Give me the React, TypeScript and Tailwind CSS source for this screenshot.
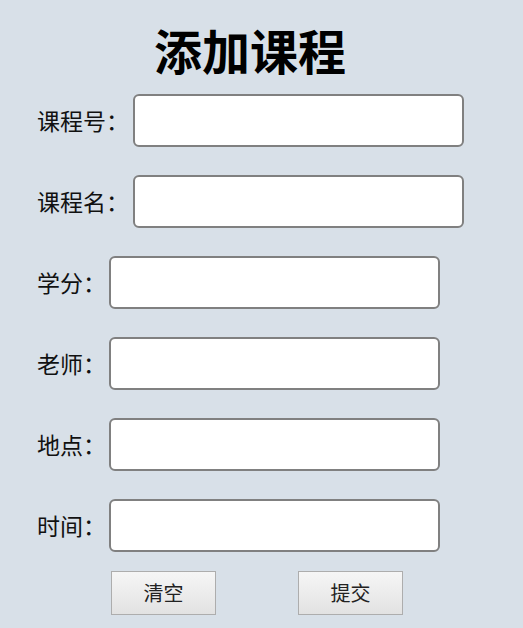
import React from "react";

const rows: { label: string; wide: boolean }[] = [
  { label: "课程号：", wide: true },
  { label: "课程名：", wide: true },
  { label: "学分：", wide: false },
  { label: "老师：", wide: false },
  { label: "地点：", wide: false },
  { label: "时间：", wide: false },
];

export default function App() {
  return (
    <div
      className="min-h-screen w-full bg-[#d8e0e8] text-black"
      style={{ fontFamily: '"Noto Sans CJK SC", "Noto Sans", sans-serif' }}
    >
      <div className="pt-[19px] pl-[37px]">
        <h1 className="pl-[117px] text-[48px] font-bold leading-[60px]">添加课程</h1>
        <div className="mt-[15px] flex flex-col gap-[28px]">
          {rows.map((r) => (
            <div key={r.label} className="flex items-center">
              <label
                className={
                  (r.wide ? "w-[96px]" : "w-[72px]") +
                  " shrink-0 text-[23px] leading-none text-[#111]"
                }
              >
                {r.label}
              </label>
              <input
                type="text"
                className="h-[53px] w-[331px] rounded-[6px] border-2 border-[#808080] bg-white outline-none"
              />
            </div>
          ))}
        </div>
        <div className="mt-[19px] flex pl-[74px]">
          <button className="h-[44px] w-[105px] border border-[#adadad] bg-gradient-to-b from-[#f6f6f6] to-[#e2e2e2] text-[20px] leading-none text-[#222]">
            清空
          </button>
          <button className="ml-[82px] h-[44px] w-[105px] border border-[#adadad] bg-gradient-to-b from-[#f6f6f6] to-[#e2e2e2] text-[20px] leading-none text-[#222]">
            提交
          </button>
        </div>
      </div>
    </div>
  );
}
